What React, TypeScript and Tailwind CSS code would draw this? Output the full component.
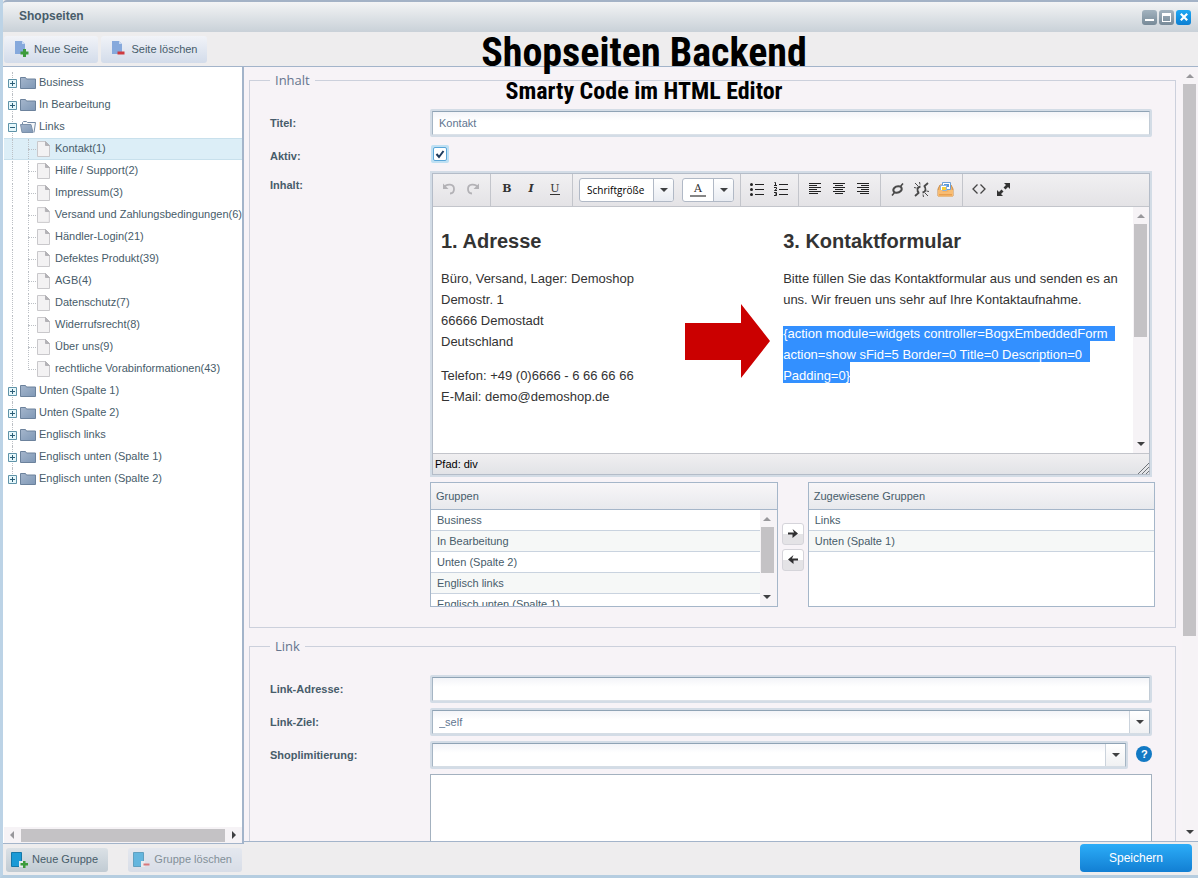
import { useState } from "react";
import type { ReactNode } from "react";

interface Page {
  id: number;
  name: string;
}

interface Group {
  name: string;
  open?: boolean;
  pages?: Page[];
}

const groups: Group[] = [
  { name: "Business" },
  { name: "In Bearbeitung" },
  {
    name: "Links",
    open: true,
    pages: [
      { id: 1, name: "Kontakt" },
      { id: 2, name: "Hilfe / Support" },
      { id: 3, name: "Impressum" },
      { id: 6, name: "Versand und Zahlungsbedingungen" },
      { id: 21, name: "Händler-Login" },
      { id: 39, name: "Defektes Produkt" },
      { id: 4, name: "AGB" },
      { id: 7, name: "Datenschutz" },
      { id: 8, name: "Widerrufsrecht" },
      { id: 9, name: "Über uns" },
      { id: 43, name: "rechtliche Vorabinformationen" },
    ],
  },
  { name: "Unten (Spalte 1)" },
  { name: "Unten (Spalte 2)" },
  { name: "Englisch links" },
  { name: "Englisch unten (Spalte 1)" },
  { name: "Englisch unten (Spalte 2)" },
];

const available = [
  "Business",
  "In Bearbeitung",
  "Unten (Spalte 2)",
  "Englisch links",
  "Englisch unten (Spalte 1)",
];
const assigned = ["Links", "Unten (Spalte 1)"];

/* ---------- icons ---------- */

function PageActionIcon({ remove }: { remove?: boolean }) {
  return (
    <svg width="16" height="16" viewBox="0 0 16 16">
      <path d="M1 0h7l3 3v10H1z" fill="#86a9dc" />
      <path d="M8 0v3h3z" fill="#c9dbf3" />
      {remove ? (
        <path d="M6.500 10.500h7v3h-7z" fill="#cf3a3f" />
      ) : (
        <path d="M9 8h3v2.500h2.500v3H12V16H9v-2.500H6.500v-3H9z" fill="#3c9b3c" />
      )}
    </svg>
  );
}

function GroupActionIcon({ remove }: { remove?: boolean }) {
  return (
    <svg width="17" height="16" viewBox="0 0 17 16">
      <path d="M.5.500h10v10l-1 4H.5z" fill="#1b9ad6" stroke="#1577a8" />
      <path d="M8 9h4v6H8z" fill="#e6ecf1" />
      {remove ? (
        <path d="M10.500 11.500h6V13.500h-6z" fill="#cf3a3f" />
      ) : (
        <path d="M12 9h2.500v2H17v2.500h-2.500V16H12v-2.500H9.500V11H12z" fill="#3c9b3c" />
      )}
    </svg>
  );
}

function FolderIcon({ open }: { open?: boolean }) {
  return (
    <svg width="16" height="12" viewBox="0 0 16 12">
      <defs>
        <linearGradient id="folder" x1="0" y1="0" x2="1" y2="1">
          <stop offset="0" stopColor="#a5b6cc" />
          <stop offset="1" stopColor="#7f98b6" />
        </linearGradient>
      </defs>
      {open ? (
        <>
          <path d="M2.500 3.500v-2l1-1h3l1 1h8l-1.500 10" fill="#f6f8fa" stroke="#7389a3" />
          <path d="M.5 3.500h10.500l2 8h-11z" fill="url(#folder)" stroke="#7c91aa" />
        </>
      ) : (
        <path d="M.5 11.500V.500h5l1 1.500h9v9.500z" fill="url(#folder)" stroke="#6c829c" />
      )}
    </svg>
  );
}

function FileIcon() {
  return (
    <svg width="13" height="16" viewBox="0 0 13 16">
      <path d="M.5.500h8l4 4v11H.5z" fill="#f3f2f3" stroke="#c9c8cb" />
      <path d="M8.500.500v4h4z" fill="#b4b3b7" stroke="#b4b3b7" />
    </svg>
  );
}

function Expander({ open }: { open?: boolean }) {
  return (
    <svg width="9" height="9" viewBox="0 0 9 9" className="block">
      <path d="M.5.500h8v8h-8z" fill="#e6f7fb" stroke="#5f93a8" />
      <path d={open ? "M2 4.500h5" : "M2 4.500h5M4.500 2v5"} stroke="#2c5f78" />
    </svg>
  );
}

function Arrow({ dir, light }: { dir: "up" | "down" | "left" | "right"; light?: boolean }) {
  const d = {
    up: "M0 6l4-4 4 4z",
    down: "M0 2h8l-4 4z",
    left: "M6 0v8L2 4z",
    right: "M2 0l4 4-4 4z",
  }[dir];
  return (
    <svg width="8" height="8" viewBox="0 0 8 8" className="shrink-0">
      <path d={d} fill={light ? "#98979b" : "#3f4042"} />
    </svg>
  );
}

function Lines({ rows }: { rows: [number, number][] }) {
  return (
    <svg width="13" height="12" viewBox="0 0 13 12">
      {rows.map(([x, w], i) => (
        <rect key={i} x={x} y={i * 2} width={w} height="1" fill="#222" />
      ))}
    </svg>
  );
}

/* ---------- small parts ---------- */

function VScroll({ thumb }: { thumb: string }) {
  return (
    <div className="flex w-[15px] shrink-0 flex-col items-center bg-[#f6f3f6] py-[5px]">
      <Arrow dir="up" light />
      <div className={"mt-1 w-[13px] bg-[#c4c2c5] " + thumb} />
      <div className="grow" />
      <Arrow dir="down" />
    </div>
  );
}

function Tool({ label, children }: { label: string; children: ReactNode }) {
  return (
    <button type="button" aria-label={label} className="flex h-6 w-6 items-center justify-center">
      {children}
    </button>
  );
}

function ToolGroup({ children, last }: { children: ReactNode; last?: boolean }) {
  return (
    <div className={"flex h-full items-center pr-[5px] pb-0.5 pl-1 " + (last ? "" : "border-r border-[#c3c5cb]")}>
      {children}
    </div>
  );
}

function Row({ label, htmlFor, children }: { label: string; htmlFor?: string; children: ReactNode }) {
  return (
    <div className="mb-[5px] flex">
      <label htmlFor={htmlFor} className="w-40 shrink-0 pt-[7px] font-bold leading-[14px] text-[#475c6a]">
        {label}
      </label>
      <div className="min-w-0 grow">{children}</div>
    </div>
  );
}

function Combo({ id, options }: { id: string; options: string[] }) {
  return (
    <div className="flex h-7 grow rounded-xs border-2 border-[#d3dce6]">
      <div className="relative flex grow border border-t-[#8fa3b5] border-r-[#a5b5c4] border-b-[#d5dde5] border-l-[#a5b5c4] bg-white">
        <select id={id} className="h-full w-full appearance-none bg-linear-to-b from-[#f3f4f8] to-white to-40% px-1.5 text-[11px] text-[#5f7591] outline-none">
          {options.map((o) => (
            <option key={o}>{o}</option>
          ))}
        </select>
        <span className="pointer-events-none absolute inset-y-0 right-0 flex w-5 items-center justify-center border-l border-[#cbd3dc] bg-linear-to-b from-white to-[#f0f1f3]">
          <Arrow dir="down" />
        </span>
      </div>
    </div>
  );
}

function GroupTable({ title, rows, scroll }: { title: string; rows: string[]; scroll?: boolean }) {
  return (
    <div className="h-[125px] min-w-0 flex-1 overflow-hidden border border-[#a5b6c9] bg-white">
      <table className="w-full border-separate border-spacing-0 text-left">
        <thead>
          <tr>
            <th
              colSpan={scroll ? 2 : 1}
              className="h-[27px] border-b border-[#a5b6c9] bg-linear-to-b from-[#f8f6f8] to-[#e8e9ed] px-[5px] font-normal text-[#475c6a]"
            >
              {title}
            </th>
          </tr>
        </thead>
        <tbody>
          {rows.map((r, i) => (
            <tr key={r}>
              <td className={"h-[21px] border-b border-[#c9d3df] px-1.5 leading-5 " + (i % 2 ? "bg-[#f6f8f7]" : "bg-white")}>
                {r}
              </td>
              {scroll && i === 0 && (
                <td rowSpan={rows.length} className="w-[17px] bg-[#f6f3f6] align-top">
                  <div className="flex h-[96px]">
                    <VScroll thumb="h-[46px]" />
                  </div>
                </td>
              )}
            </tr>
          ))}
        </tbody>
      </table>
    </div>
  );
}

/* ---------- panels ---------- */

function Tree() {
  const [selected, setSelected] = useState(1);
  return (
    <ul className="grow overflow-hidden pt-[5px] leading-[22px] text-[#475c6a]">
      {groups.map((g, gi) => (
        <li key={g.name}>
          <div className="relative flex h-[22px] items-center pl-1">
            <span
              className={
                "absolute left-2 top-0 w-0 border-l border-dotted border-[#bcc0c5] " +
                (gi === groups.length - 1 ? "h-3" : "h-full")
              }
            />
            <button type="button" aria-label={"Gruppe " + g.name} className="relative mt-px mr-[3px]">
              <Expander open={g.open} />
            </button>
            <FolderIcon open={g.open} />
            <span className="-mt-0.5 pl-[3px]">{g.name}</span>
          </div>
          {g.pages && (
            <ul>
              {g.pages.map((p, i) => (
                <li
                  key={p.id}
                  className={
                    "relative h-[22px] border-y " +
                    (p.id === selected ? "border-[#c8e0ec] bg-[#dceef7]" : "border-transparent")
                  }
                >
                  <span className="absolute left-2 top-0 h-full border-l border-dotted border-[#bcc0c5]" />
                  <span
                    className={
                      "absolute left-6 top-0 border-l border-dotted border-[#bcc0c5] " +
                      (i === g.pages!.length - 1 ? "h-[11px]" : "h-full")
                    }
                  />
                  <span className="absolute left-6 top-2.5 w-2 border-t border-dotted border-[#bcc0c5]" />
                  <button
                    type="button"
                    onClick={() => setSelected(p.id)}
                    className="relative flex h-5 w-full items-center pl-[33px] whitespace-nowrap"
                  >
                    <FileIcon />
                    <span className="-mt-0.5 pl-[5px]">
                      {p.name}({p.id})
                    </span>
                  </button>
                </li>
              ))}
            </ul>
          )}
        </li>
      ))}
    </ul>
  );
}

function Editor() {
  return (
    <div className="mr-[3px] border-2 border-[#d3dce6]">
      <div className="border border-[#b4bcc8] bg-white">
        <div className="flex h-[33px] items-center border-b border-[#c3c5cb] bg-linear-to-b from-[#f1f0f2] to-[#e4e3e6] text-[#333]">
          <ToolGroup>
            <Tool label="Rückgängig">
              <svg width="14" height="14" viewBox="0 0 14 14" fill="none" stroke="#b3b2b6" strokeWidth="1.8">
                <path d="M2 5.500C4.500 1.500 12 1.500 12 7c0 3-2 4.500-4 4.500" />
                <path d="M1 1.500v5.500h5.500z" fill="#b3b2b6" stroke="none" />
              </svg>
            </Tool>
            <Tool label="Wiederholen">
              <svg width="14" height="14" viewBox="0 0 14 14" fill="none" stroke="#b3b2b6" strokeWidth="1.8">
                <path d="M12 5.500C9.500 1.500 2 1.500 2 7c0 3 2 4.500 4 4.500" />
                <path d="M13 1.500v5.500H7.500z" fill="#b3b2b6" stroke="none" />
              </svg>
            </Tool>
          </ToolGroup>
          <ToolGroup>
            <Tool label="Fett">
              <b className="font-['DejaVu_Serif',serif] text-[11px]">B</b>
            </Tool>
            <Tool label="Kursiv">
              <i className="font-['DejaVu_Serif',serif] text-[11px] font-bold">I</i>
            </Tool>
            <Tool label="Unterstrichen">
              <span className="border-b border-[#333] font-['DejaVu_Serif',serif] text-[11px] leading-[10px]">U</span>
            </Tool>
          </ToolGroup>
          <div className="flex h-full items-center gap-2 border-r border-[#c3c5cb] px-1.5">
            <div className="relative h-6 w-[95px] overflow-hidden rounded-[3px] border border-[#b1b9c6] bg-white">
              <select
                aria-label="Schriftgröße"
                className="h-full w-full appearance-none pl-[7px] font-['Open_Sans','Noto_Sans',sans-serif] text-[10px] text-black outline-none"
              >
                <option>Schriftgröße</option>
              </select>
              <span className="pointer-events-none absolute inset-y-0 right-0 flex w-5 items-center justify-center border-l border-[#b1b9c6] bg-linear-to-b from-white to-[#e9ecf2]">
                <Arrow dir="down" />
              </span>
            </div>
            <div className="flex h-6 w-[52px] overflow-hidden rounded-[3px] border border-[#b1b9c6] bg-white">
              <button type="button" aria-label="Textfarbe" className="flex w-[30px] items-center justify-center">
                <span className="w-4 border-b-2 border-[#858585] text-center font-['DejaVu_Serif',serif] text-[11px] leading-3">
                  A
                </span>
              </button>
              <button
                type="button"
                aria-label="Farbauswahl"
                className="flex w-5 items-center justify-center border-l border-[#b1b9c6] bg-linear-to-b from-white to-[#e9ecf2]"
              >
                <Arrow dir="down" />
              </button>
            </div>
          </div>
          <ToolGroup>
            <Tool label="Aufzählung">
              <svg width="14" height="14" viewBox="0 0 14 14" fill="#222">
                <circle cx="1.500" cy="2.500" r="1.500" />
                <circle cx="1.500" cy="7.500" r="1.500" />
                <circle cx="1.500" cy="12.500" r="1.500" />
                <path d="M5 2h9v1H5zM5 7h9v1H5zM5 12h9v1H5z" />
              </svg>
            </Tool>
            <Tool label="Nummerierung">
              <svg width="14" height="14" viewBox="0 0 14 14" fill="#222">
                <path d="M5 2h9v1H5zM5 7h9v1H5zM5 12h9v1H5z" />
                <path d="M.5.500h1v3M0 3.500h3M0 5.500h2.500v1.500L.5 8.500H3M0 10.500h2.500v3H0M1 12h1.500" fill="none" stroke="#222" />
              </svg>
            </Tool>
          </ToolGroup>
          <ToolGroup>
            <Tool label="Linksbündig">
              <Lines rows={[[0, 12], [0, 8], [0, 12], [0, 8], [0, 12], [0, 9]]} />
            </Tool>
            <Tool label="Zentriert">
              <Lines rows={[[0, 12], [2, 8], [0, 12], [2, 8], [0, 12], [2, 8]]} />
            </Tool>
            <Tool label="Rechtsbündig">
              <Lines rows={[[0, 12], [4, 8], [0, 12], [4, 8], [0, 12], [3, 9]]} />
            </Tool>
          </ToolGroup>
          <ToolGroup>
            <Tool label="Link einfügen">
              <svg width="13" height="13" viewBox="0 0 13 13" fill="none" stroke="#4a4a4a" strokeWidth="2">
                <path d="M3.500 9.500C.5 6.500 4 2.500 9 3.500M9.500 3.500c3 3-.5 7-5.500 6" />
                <path d="M1 12.500l3-3.500M12 .500l-3 3.500" strokeWidth="1.600" />
              </svg>
            </Tool>
            <Tool label="Link entfernen">
              <svg width="15" height="15" viewBox="0 0 15 15" fill="none" stroke="#4a4a4a" strokeWidth="1.800">
                <path d="M5 11C2.500 9 3 5 6.500 4.500M10 4c2.500 2 2 6-1.500 6.500" />
                <path d="M1 14l4-3.500M14 1l-4 3.500" />
                <path d="M5.500 0l.5 2.500M1 1l3 3M0 5.500l2.500.500M9.500 15l-.5-2.500M14 14l-3-3M15 9.500l-2.500-.500" strokeWidth="1" />
              </svg>
            </Tool>
            <Tool label="Medien">
              <svg width="17" height="15" viewBox="0 0 17 15">
                <path d="M1 7l2-4h11l2 4v7H1z" fill="#f3b265" stroke="#c98d4a" />
                <path d="M5.500.500h8v7h-8z" fill="#fff" stroke="#6d9fd4" />
                <path d="M7 2h5v3H7z" fill="#5798d9" />
                <path d="M3.500 3.500h6v5h-6z" fill="#fff" stroke="#8fb4da" />
                <path d="M5 5h4v3H5z" fill="#f3cf38" />
                <path d="M1 8h4l1 2h5l1-2h4v5.500q0 1-1 1H2q-1 0-1-1z" fill="#f8bd74" />
                <path d="M2 12h13v1.500H2z" fill="#e9a050" />
              </svg>
            </Tool>
          </ToolGroup>
          <ToolGroup last>
            <Tool label="Quelltext">
              <svg width="14" height="10" viewBox="0 0 14 10" fill="none" stroke="#444" strokeWidth="1.300">
                <path d="M5.500.500L1 5l4.500 4.500M8.500.500L13 5 8.500 9.500" />
              </svg>
            </Tool>
            <Tool label="Vollbild">
              <svg width="13" height="13" viewBox="0 0 13 13" fill="#333">
                <path d="M7 0h6v6l-2-2-2.500 2.500-2-2L9 2zM6 13H0V7l2 2 2.500-2.500 2 2L4 11z" />
              </svg>
            </Tool>
          </ToolGroup>
        </div>
        <div className="flex h-[246px]">
          <div className="grid grow grid-cols-2 px-2 pt-[22px] text-[13px] leading-[21px] text-[#333]">
            <div>
              <h2 className="mb-[15px] text-xl leading-6 font-bold">1. Adresse</h2>
              <p className="mb-[13px]">
                Büro, Versand, Lager: Demoshop
                <br />
                Demostr. 1
                <br />
                66666 Demostadt
                <br />
                Deutschland
              </p>
              <p>
                Telefon: +49 (0)6666 - 6 66 66 66
                <br />
                E-Mail: demo@demoshop.de
              </p>
            </div>
            <div className="relative">
              <h2 className="mb-[15px] text-xl leading-6 font-bold">3. Kontaktformular</h2>
              <p className="mb-[13px]">Bitte füllen Sie das Kontaktformular aus und senden es an uns. Wir freuen uns sehr auf Ihre Kontaktaufnahme.</p>
              <p className="whitespace-pre text-white">
                <span className="bg-[#3390ff] pr-1">{"{action module=widgets controller=BogxEmbeddedForm "}</span>
                <br />
                <span className="bg-[#3390ff] pt-1.5 pr-1">{"action=show sFid=5 Border=0 Title=0 Description=0 "}</span>
                <br />
                <span className="bg-[#3390ff] pt-1.5">{"Padding=0}"}</span>
              </p>
              <svg width="86" height="74" viewBox="0 0 86 74" className="absolute top-[75px] -left-[98px]">
                <path d="M0 19h56V0l29 37-29 37V56H0z" fill="#cb0000" />
              </svg>
            </div>
          </div>
          <VScroll thumb="h-[113px]" />
          <div className="w-0.5 bg-[#f6f3f6]" />
        </div>
        <div className="flex h-[21px] items-center justify-between border-t border-[#c3c5cb] bg-linear-to-b from-[#f0eff1] to-[#e2e3e7] pl-0.5 text-black">
          <span>Pfad: div</span>
          <svg width="11" height="11" viewBox="0 0 11 11" className="self-end" stroke="#6f7479">
            <path d="M0 11L11 0M4 11l7-7M8 11l3-3" />
          </svg>
        </div>
      </div>
    </div>
  );
}

function MoveButton({ back }: { back?: boolean }) {
  return (
    <button
      type="button"
      aria-label={back ? "Gruppe entfernen" : "Gruppe zuweisen"}
      className="flex h-[22px] w-[22px] items-center justify-center rounded-[3px] border border-[#d5d4da] bg-linear-to-b from-white from-50% to-[#e4e3e6] to-50%"
    >
      <svg width="10" height="9" viewBox="0 0 10 9" fill="#2f2f31">
        <path d={back ? "M10 3.500v2H5.500V9L0 4.500 5.500 0l-1.500 3.500z" : "M0 3.500v2h4.500V9L10 4.500 4.500 0l1.500 3.500z"} />
      </svg>
    </button>
  );
}

const fieldset = "border border-[#ccd0dc] px-5 pt-[19px] pb-5";
const legend = "px-[5px] font-['Open_Sans','Noto_Sans',sans-serif] text-[13px] leading-5 text-[#66758e]";
const input =
  "block h-full w-full border border-t-[#8fa3b5] border-r-[#c2ccd6] border-b-[#dbe1e8] border-l-[#a5b5c4] bg-linear-to-b from-[#f3f4f8] to-white to-40% px-1.5 text-[#5f7591] outline-none";

export default function App() {
  const [active, setActive] = useState(true);

  return (
    <div className="relative flex h-screen flex-col overflow-hidden border-b-[3px] border-l-[3px] border-b-[#b5cde0] border-l-[#bcd3e6] bg-[#eeedee] font-['Liberation_Sans',Arial,sans-serif] text-[11px] text-[#475c6a]">
      <header className="flex h-8 shrink-0 items-center justify-between rounded-tl border-t-2 border-[#a3b2c6] bg-linear-to-b from-[#f3f4f5] to-[#c9d1d8] pr-[7px] pb-0.5 pl-4">
        <h1 className="text-xs font-bold">Shopseiten</h1>
        <div className="flex gap-0.5 pt-0.5">
          <button type="button" aria-label="Minimieren" className="flex h-[15px] w-[15px] items-center justify-center rounded-[3px] bg-linear-to-b from-[#a3b3bf] to-[#778a98]">
            <span className="mt-1.5 h-0.5 w-[9px] bg-white" />
          </button>
          <button type="button" aria-label="Maximieren" className="flex h-[15px] w-[15px] items-center justify-center rounded-[3px] bg-linear-to-b from-[#a3b3bf] to-[#778a98]">
            <span className="h-[9px] w-[9px] border border-t-[3px] border-white" />
          </button>
          <button type="button" aria-label="Schließen" className="flex h-[15px] w-[15px] items-center justify-center rounded-[3px] bg-linear-to-b from-[#1fa8f4] to-[#0c7fd2]">
            <svg width="8" height="8" viewBox="0 0 8 8" stroke="#fff" strokeWidth="2.200">
              <path d="M.8.800l6.400 6.400M7.200.800L.8 7.200" />
            </svg>
          </button>
        </div>
      </header>

      <div className="flex h-[34px] shrink-0 items-center gap-[3px] px-px">
        <button type="button" className="flex h-[27px] items-center gap-1 rounded-[3px] bg-linear-to-b from-[#f1f3f8] to-[#d3dcea] px-2.5">
          <PageActionIcon />
          Neue Seite
        </button>
        <button type="button" className="flex h-[27px] items-center gap-1 rounded-[3px] bg-linear-to-b from-[#f1f3f8] to-[#d3dcea] px-2.5">
          <PageActionIcon remove />
          Seite löschen
        </button>
      </div>

      <div className="flex min-h-0 grow">
        <aside className="flex w-[241px] shrink-0 flex-col">
          <div className="flex min-h-0 grow flex-col border-t border-r-2 border-b border-[#a3b4ca] bg-white pl-px">
            <Tree />
            <div className="flex h-4 items-center gap-[5px] bg-[#f6f3f6] px-1">
              <Arrow dir="left" light />
              <div className="h-[13px] grow bg-[#c4c2c5]" />
              <Arrow dir="right" />
            </div>
          </div>
          <div className="flex h-[31px] shrink-0 items-center justify-between pr-0.5 pl-[3px]">
            <button type="button" className="flex h-6 items-center gap-1 rounded-[3px] bg-linear-to-b from-[#dbe1e6] to-[#c1cbd3] pr-2.5 pl-[5px]">
              <GroupActionIcon />
              Neue Gruppe
            </button>
            <button type="button" disabled className="flex h-6 items-center gap-1 rounded-[3px] bg-linear-to-b from-[#e0e6f0] to-[#cdd6e4] pr-2.5 pl-[5px] opacity-65">
              <GroupActionIcon remove />
              Gruppe löschen
            </button>
          </div>
        </aside>

        <main className="flex min-w-0 grow flex-col">
          <div className="flex min-h-0 grow overflow-hidden border-y border-[#a3b4ca] bg-[#f7f3f7]">
            <form className="min-w-0 grow pt-[3px] pr-1.5 pl-[5px]">
              <fieldset className={fieldset}>
                <legend className={legend}>Inhalt</legend>
                <Row label="Titel:" htmlFor="titel">
                  <div className="mr-[3px] h-7 rounded-xs border-2 border-[#d3dce6]">
                    <input id="titel" type="text" defaultValue="Kontakt" className={input} />
                  </div>
                </Row>
                <Row label="Aktiv:" htmlFor="aktiv">
                  <div className="flex h-6 items-center pl-px">
                    <span className="relative flex h-[18px] w-[18px] items-center justify-center rounded-xs bg-[#bfe0f3]">
                      <input
                        id="aktiv"
                        type="checkbox"
                        checked={active}
                        onChange={(e) => setActive(e.target.checked)}
                        className="h-3.5 w-3.5 appearance-none rounded-xs border border-[#5aa6d8] bg-white"
                      />
                      {active && (
                        <svg width="10" height="10" viewBox="0 0 10 10" className="pointer-events-none absolute" fill="none" stroke="#1d3a5c" strokeWidth="2">
                          <path d="M1.500 5l2.500 3 4.500-6" />
                        </svg>
                      )}
                    </span>
                  </div>
                </Row>
                <Row label="Inhalt:">
                  <Editor />
                </Row>
                <div className="flex gap-1 pl-40">
                  <GroupTable title="Gruppen" rows={available} scroll />
                  <div className="flex flex-col justify-center gap-1 pt-1">
                    <MoveButton />
                    <MoveButton back />
                  </div>
                  <GroupTable title="Zugewiesene Gruppen" rows={assigned} />
                </div>
              </fieldset>

              <fieldset className={fieldset + " mt-2"}>
                <legend className={legend}>Link</legend>
                <Row label="Link-Adresse:" htmlFor="adresse">
                  <div className="mr-[3px] h-7 rounded-xs border-2 border-[#d3dce6]">
                    <input id="adresse" type="text" className={input} />
                  </div>
                </Row>
                <Row label="Link-Ziel:" htmlFor="ziel">
                  <div className="mr-[3px] flex">
                    <Combo id="ziel" options={["_self", "_blank"]} />
                  </div>
                </Row>
                <Row label="Shoplimitierung:" htmlFor="limit">
                  <div className="mr-[3px] flex items-center gap-2">
                    <Combo id="limit" options={[""]} />
                    <button type="button" aria-label="Hilfe" className="mb-0.5 h-4 w-4 rounded-full bg-[#1279c4] text-[11px] leading-4 font-bold text-white">
                      ?
                    </button>
                  </div>
                </Row>
                <div className="flex pr-[3px] pl-40">
                  <textarea aria-label="Shops" className="h-[120px] grow resize-none border border-[#a3b1bf] bg-white outline-none" />
                </div>
              </fieldset>
            </form>
            <VScroll thumb="h-[552px]" />
            <div className="w-px" />
          </div>
          <footer className="flex h-[33px] shrink-0 items-center justify-end pr-1.5 pb-0.5">
            <button type="submit" className="h-7 w-28 rounded bg-linear-to-b from-[#2cadf8] to-[#127fd3] text-xs text-white">
              Speichern
            </button>
          </footer>
        </main>
      </div>

      <div className="pointer-events-none absolute top-[33px] left-[471px] w-[340px] text-center font-['Roboto_Condensed','Liberation_Sans_Narrow','DejaVu_Sans_Condensed',sans-serif] font-bold whitespace-nowrap text-black">
        <p className="text-[40px] leading-10">Shopseiten Backend</p>
        <p className="text-2xl leading-9">Smarty Code im HTML Editor</p>
      </div>
    </div>
  );
}
